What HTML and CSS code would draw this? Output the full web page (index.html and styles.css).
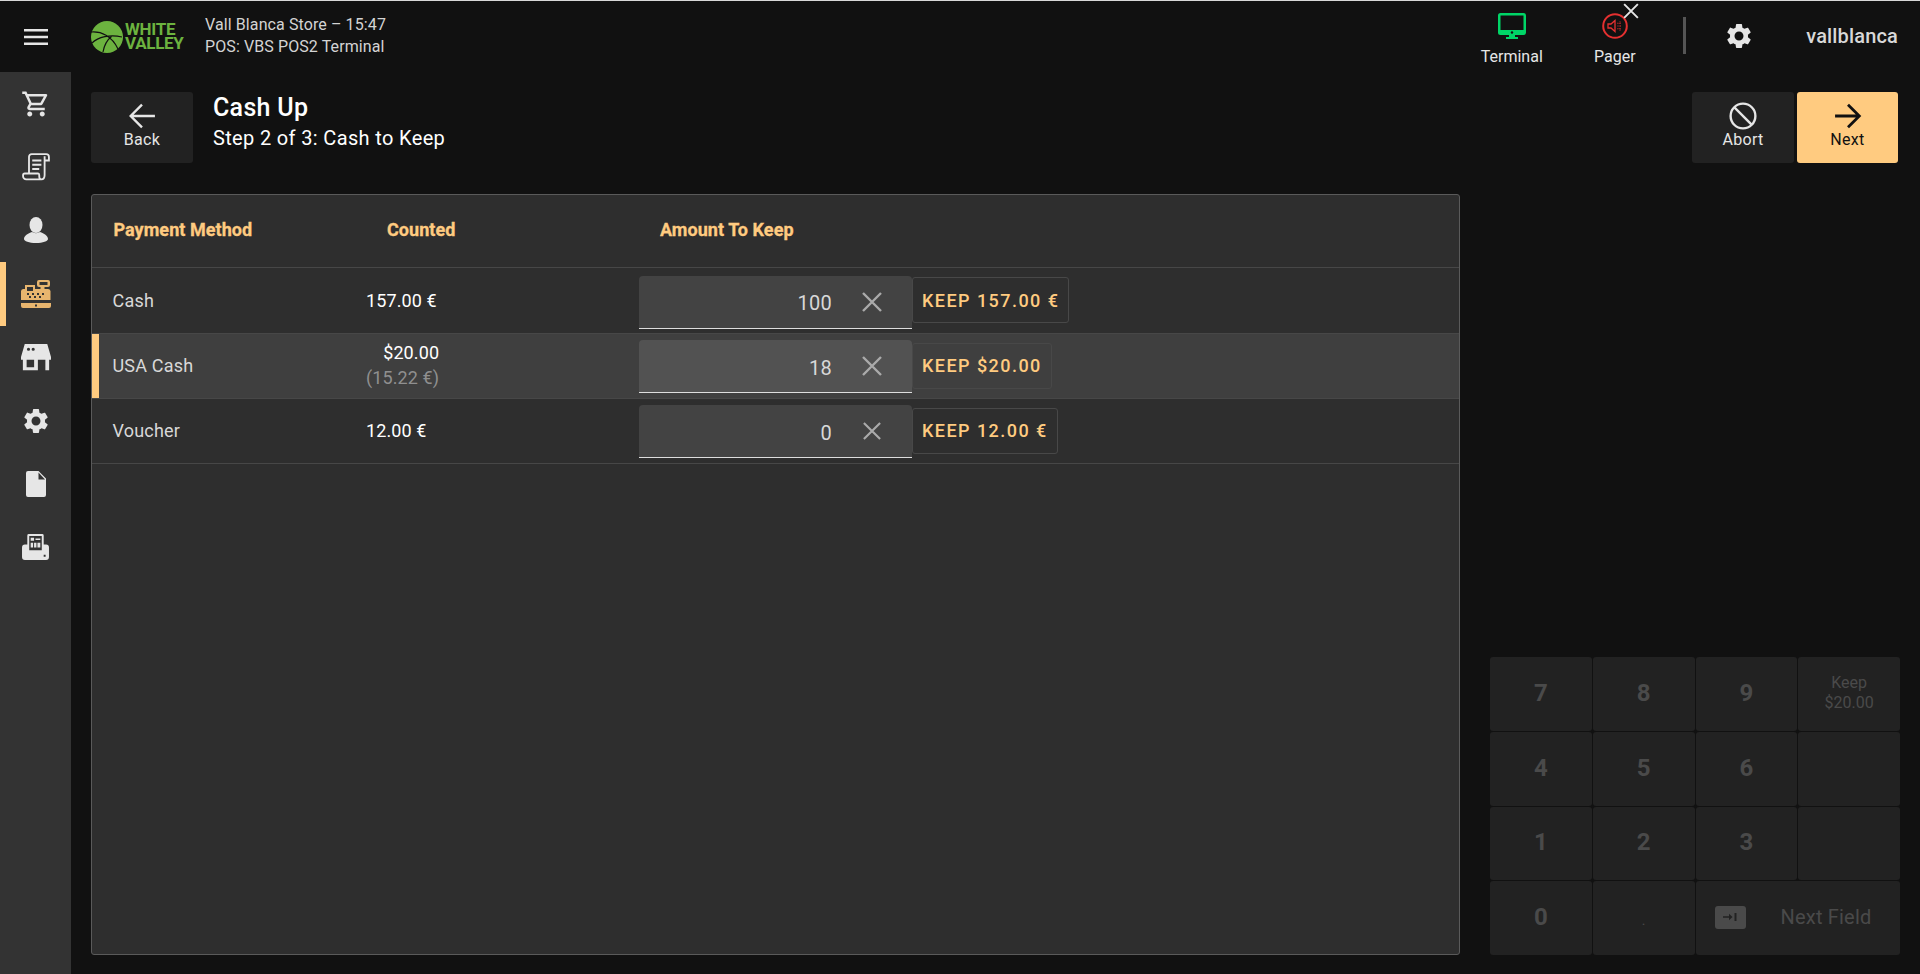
FILE: index.html
```html
<!DOCTYPE html>
<html lang="en">
<head>
<meta charset="utf-8">
<title>Cash Up</title>
<link rel="stylesheet" href="styles.css">
</head>
<body>
<div class="app">
  <header class="topbar">
    <button class="menu-btn" aria-label="Menu">
      <svg class="icon-menu" viewBox="0 0 24 16"><path d="M0 0h24v2.400H0zM0 6.800h24v2.400H0zM0 13.600h24V16H0z"/></svg>
    </button>
    <div class="logo">
      <svg class="logo-ball" viewBox="0 0 32 32"><circle cx="16" cy="16" r="16" fill="#6cb33f"/><path d="M0 11c10-1 21 4 27 17M1 22c6-6 18-9 30-6M12 31c1-6 4-12 9-16" fill="none" stroke="#111" stroke-width="1.200"/></svg>
      <div class="logo-text"><span>WHITE</span><span>VALLEY</span></div>
    </div>
    <div class="store-info">
      <div>Vall Blanca Store – 15:47</div>
      <div>POS: VBS POS2 Terminal</div>
    </div>
    <div class="topbar-right">
      <div class="status">
        <svg class="status-icon" viewBox="0 0 28 26"><path fill="#00d567" d="M2.500 0h23A2.500 2.500 0 0 1 28 2.500v17a2.500 2.500 0 0 1-2.500 2.500H17v2h3v2H8v-2h3v-2H2.500A2.500 2.500 0 0 1 0 19.500v-17A2.500 2.500 0 0 1 2.500 0zM2.500 2.500v14.500h23V2.500z"/><circle cx="14" cy="19.500" r="1.200" fill="#111"/></svg>
        <span>Terminal</span>
      </div>
      <div class="status pager">
        <svg class="status-icon" viewBox="0 0 26 26"><circle cx="13" cy="13" r="11.800" fill="none" stroke="#e53030" stroke-width="2"/><path fill="none" stroke="#e53030" stroke-width="1.300" d="M6 11h3l4-3.500v11L9 15H6z"/><path fill="none" stroke="#e53030" stroke-width="1.200" stroke-dasharray="1 1.500" d="M15.500 13h5M15.500 10.500l4-2.500M15.500 15.500l4 2.500M18 10v6"/></svg>
        <span>Pager</span>
        <svg class="pager-x" viewBox="0 0 14 14"><path d="M1 1l12 12M13 1L1 13" stroke="#e6e6e6" stroke-width="1.700" fill="none"/></svg>
      </div>
      <div class="divider"></div>
      <svg class="icon-gear top-gear" viewBox="0 0 24 24"><path d="M19.140 12.940c.04-.3.06-.61.06-.94 0-.32-.02-.64-.07-.94l2.030-1.580c.18-.14.23-.41.12-.61l-1.920-3.320c-.12-.22-.37-.29-.59-.22l-2.390.96c-.5-.38-1.030-.7-1.620-.94l-.36-2.540c-.04-.24-.24-.41-.48-.41h-3.840c-.24 0-.43.17-.47.41l-.36 2.540c-.59.24-1.130.57-1.620.94l-2.390-.96c-.22-.08-.47 0-.59.22L2.740 8.870c-.12.21-.08.47.12.61l2.030 1.580c-.05.3-.09.63-.09.94s.02.64.07.94l-2.030 1.580c-.18.14-.23.41-.12.61l1.920 3.320c.12.22.37.29.59.22l2.390-.96c.5.38 1.030.7 1.620.94l.36 2.540c.05.24.24.41.48.41h3.840c.24 0 .44-.17.47-.41l.36-2.540c.59-.24 1.130-.56 1.620-.94l2.390.96c.22.08.47 0 .59-.22l1.920-3.320c.12-.22.07-.47-.12-.61l-2.010-1.580zM12 15.600c-1.980 0-3.600-1.620-3.600-3.600s1.620-3.600 3.600-3.600 3.600 1.620 3.600 3.600-1.620 3.600-3.600 3.600z"/></svg>
      <div class="username">vallblanca</div>
    </div>
  </header>

  <div class="body">
    <nav class="sidebar">
      <div class="nav-item">
        <svg class="nav-icon" viewBox="0 0 24 24"><path d="M15.550 13c.75 0 1.410-.41 1.750-1.030l3.580-6.490c.37-.66-.11-1.480-.87-1.480H5.210l-.94-2H1v2h2l3.600 7.590-1.350 2.440C4.520 15.370 5.480 17 7 17h12v-2H7l1.100-2h7.450zM6.160 6h12.150l-2.760 5H8.530L6.160 6zM7 18c-1.100 0-1.990.9-1.990 2S5.900 22 7 22s2-.9 2-2-.9-2-2-2zm10 0c-1.100 0-1.990.9-1.990 2s.89 2 1.990 2 2-.9 2-2-.9-2-2-2z"/></svg>
      </div>
      <div class="nav-item">
        <svg class="nav-icon receipt" viewBox="0 0 26 26"><path fill="none" stroke="currentColor" stroke-width="1.700" d="M6.500 18V3.500C6.500 2 7.500 1 9 1h13.500c1.500 0 2.500 1 2.500 2.500V7h-4M21 3v17.500c0 2-1 4-3 4H4c-1.800 0-3-1.300-3-3v-1c0-1 .7-1.500 1.500-1.500H15c.8 0 1 .7 1 1.500v1c0 1.500.8 3 2 3"/><path d="M9.500 6h8.500v1.800H9.500zM9.500 10h8.500v1.800H9.500zM9.500 14h6.500v1.800H9.500z"/></svg>
      </div>
      <div class="nav-item">
        <svg class="nav-icon person" viewBox="0 0 24 27"><ellipse cx="12" cy="8" rx="6.500" ry="8"/><path d="M0 22c0-3.500 4-5.500 8-7 2.500 1.500 5.500 1.500 8 0 4 1.500 8 3.500 8 7 0 2-5 4-12 4S0 24 0 22z"/></svg>
      </div>
      <div class="nav-item active">
        <svg class="nav-icon till" viewBox="0 0 30 30"><path fill-rule="evenodd" d="M18 1h9a2 2 0 0 1 2 2v3a2 2 0 0 1-2 2h-3.500v2h3.500a2.500 2.500 0 0 1 2.500 2v9H0v-9a2.500 2.500 0 0 1 2.500-2H4V6h10v4h5.500V8H18a2 2 0 0 1-2-2V3a2 2 0 0 1 2-2zm.500 2v3h8V3zM6 8v4h6V8zM6 14v2h2v-2zm5 0v2h2v-2zm5 0v2h2v-2zm5 0v2h2v-2zm-13 3v2h2v-2zm5 0v2h2v-2zm5 0v2h2v-2z"/><path fill-rule="evenodd" d="M0 24h30v3a2 2 0 0 1-2 2H2a2 2 0 0 1-2-2zm14 1.500v2h2v-2z"/></svg>
      </div>
      <div class="nav-item">
        <svg class="nav-icon" viewBox="0 0 32 30"><path fill-rule="evenodd" d="M4 1h24l4 14v3h-2v11h-4V18H18v11H2V18H0v-3zM8 5a1.700 1.700 0 1 0 0 3.400A1.700 1.700 0 0 0 8 5zm5 0a1.700 1.700 0 1 0 0 3.400A1.700 1.700 0 0 0 13 5zM6 18v8h8v-8z"/></svg>
      </div>
      <div class="nav-item">
        <svg class="nav-icon icon-gear" viewBox="0 0 24 24"><path d="M19.140 12.940c.04-.3.06-.61.06-.94 0-.32-.02-.64-.07-.94l2.030-1.580c.18-.14.23-.41.12-.61l-1.920-3.320c-.12-.22-.37-.29-.59-.22l-2.390.96c-.5-.38-1.030-.7-1.620-.94l-.36-2.540c-.04-.24-.24-.41-.48-.41h-3.840c-.24 0-.43.17-.47.41l-.36 2.540c-.59.24-1.130.57-1.620.94l-2.390-.96c-.22-.08-.47 0-.59.22L2.740 8.870c-.12.21-.08.47.12.61l2.030 1.580c-.05.3-.09.63-.09.94s.02.64.07.94l-2.030 1.580c-.18.14-.23.41-.12.61l1.920 3.320c.12.22.37.29.59.22l2.390-.96c.5.38 1.030.7 1.620.94l.36 2.540c.05.24.24.41.48.41h3.840c.24 0 .44-.17.47-.41l.36-2.540c.59-.24 1.130-.56 1.620-.94l2.390.96c.22.08.47 0 .59-.22l1.920-3.320c.12-.22.07-.47-.12-.61l-2.010-1.580zM12 15.600c-1.980 0-3.600-1.620-3.600-3.600s1.620-3.600 3.600-3.600 3.600 1.620 3.600 3.600-1.620 3.600-3.600 3.600z"/></svg>
      </div>
      <div class="nav-item">
        <svg class="nav-icon file" viewBox="0 0 20 26"><path d="M2 0h10.500L20 7.500V24a2 2 0 0 1-2 2H2a2 2 0 0 1-2-2V2a2 2 0 0 1 2-2zm10.500 1.500V8.500H19z" fill-rule="evenodd"/></svg>
      </div>
      <div class="nav-item">
        <svg class="nav-icon printer" viewBox="0 0 28 27"><path fill-rule="evenodd" d="M7 0h14a1.500 1.500 0 0 1 1.500 1.500V11H25a3 3 0 0 1 3 3v10a3 3 0 0 1-3 3H3a3 3 0 0 1-3-3V14a3 3 0 0 1 3-3h2.500V1.500A1.500 1.500 0 0 1 7 0zm.500 2v15h13V2zM9 4h3.500v3H9zM14 4.800h5v1.500h-5zM9 9h2.500v5H9zM12.500 9H15v5h-2.500zM16 9h3v5h-3zM22.500 21.500v2h2v-2z"/></svg>
      </div>
    </nav>

    <main class="main">
      <div class="page-head">
        <button class="action">
          <svg class="action-icon" viewBox="0 0 26 26"><path d="M25 13H2M13 2.500L2.500 13 13 23.500" fill="none" stroke="currentColor" stroke-width="2.200"/></svg>
          <span>Back</span>
        </button>
        <div class="titles">
          <div class="title">Cash Up</div>
          <div class="subtitle">Step 2 of 3: Cash to Keep</div>
        </div>
        <div class="head-actions">
          <button class="action">
            <svg class="action-icon" viewBox="0 0 26 26"><circle cx="13" cy="13" r="11.500" fill="none" stroke="currentColor" stroke-width="2.200"/><path d="M5 5l16 16" stroke="currentColor" stroke-width="2.200"/></svg>
            <span>Abort</span>
          </button>
          <button class="action primary">
            <svg class="action-icon" viewBox="0 0 26 26"><path d="M1 13h23M13 2.500L23.500 13 13 23.500" fill="none" stroke="currentColor" stroke-width="2.600"/></svg>
            <span>Next</span>
          </button>
        </div>
      </div>

      <div class="content">
        <section class="panel">
          <div class="row head-row">
            <div class="cell th th-method">Payment Method</div>
            <div class="cell th th-counted">Counted</div>
            <div class="cell th th-amount">Amount To Keep</div>
          </div>
          <div class="row first-row">
            <div class="cell method">Cash</div>
            <div class="cell"><div class="counted"><span>157.00 €</span></div></div>
            <div class="input"><span class="value">100</span><svg class="clear" viewBox="0 0 20 20"><path d="M1 1l18 18M19 1L1 19"/></svg></div>
            <button class="keep">KEEP 157.00 €</button>
          </div>
          <div class="row selected raised">
            <div class="cell method">USA Cash</div>
            <div class="cell"><div class="counted"><span>$20.00</span><span class="sub">(15.22 €)</span></div></div>
            <div class="input"><span class="value">18</span><svg class="clear" viewBox="0 0 20 20"><path d="M1 1l18 18M19 1L1 19"/></svg></div>
            <button class="keep">KEEP $20.00</button>
          </div>
          <div class="row raised">
            <div class="cell method">Voucher</div>
            <div class="cell"><div class="counted"><span>12.00 €</span></div></div>
            <div class="input"><span class="value">0</span><svg class="clear small" viewBox="0 0 20 20"><path d="M1 1l18 18M19 1L1 19"/></svg></div>
            <button class="keep">KEEP 12.00 €</button>
          </div>
        </section>

        <aside class="pad">
          <div class="keypad">
            <div class="key">7</div>
            <div class="key">8</div>
            <div class="key">9</div>
            <div class="key small-key"><span>Keep</span><span>$20.00</span></div>
            <div class="key">4</div>
            <div class="key">5</div>
            <div class="key">6</div>
            <div class="key"></div>
            <div class="key">1</div>
            <div class="key">2</div>
            <div class="key">3</div>
            <div class="key"></div>
            <div class="key">0</div>
            <div class="key dot">.</div>
            <div class="key wide">
              <span class="tab-key"><svg viewBox="0 0 14 8"><path d="M0 3.300h6V.8L9.500 4 6 7.200V4.700H0zM11.500 0H13.500V8H11.500z"/></svg></span>
              <span class="next-field">Next Field</span>
            </div>
          </div>
        </aside>
      </div>
    </main>
  </div>
</div>
</body>
</html>
```

FILE: styles.css
```css
* { box-sizing: border-box; }
html, body { margin: 0; height: 100%; }
body {
  background: #111;
  color: #e6e6e6;
  font-family: Roboto, "Liberation Sans", sans-serif;
  overflow: hidden;
}
button { font-family: inherit; border: 0; padding: 0; cursor: pointer; }

.app { height: 100%; display: flex; flex-direction: column; border-top: 1px solid #d8d8d8; }

.topbar { height: 71px; flex: none; display: flex; align-items: center; }
.menu-btn {
  width: 72px; height: 71px; flex: none;
  display: flex; align-items: center; justify-content: center;
  background: none; color: #e6e6e6;
}
.icon-menu { width: 24px; height: 16px; fill: currentColor; }

.logo { margin-left: 19px; width: 114px; display: flex; align-items: center; gap: 2px; }
.logo-ball { width: 32px; height: 32px; flex: none; }
.logo-text {
  display: flex; flex-direction: column;
  font-size: 17px; line-height: 14px; font-weight: 700;
  color: #6cb33f; letter-spacing: -.3px; margin-top: -1px;
}

.store-info { font-size: 16px; line-height: 22px; color: #d4d4d4; font-weight: 400; letter-spacing: .1px; margin-top: -1px; }

.topbar-right { margin-left: auto; display: flex; align-items: center; padding-right: 22px; }
.status { width: 103px; display: flex; flex-direction: column; align-items: center; position: relative; margin-top: 6px; font-size: 16px; color: #e6e6e6; }
.status-icon { width: 28px; height: 26px; margin-bottom: 8px; }
.pager-x { position: absolute; top: -10px; left: 60px; width: 16px; height: 16px; }
.divider { width: 3px; height: 37px; background: #555; margin-left: 17px; margin-top: -2px; }
.icon-gear { fill: #e6e6e6; }
.top-gear { width: 30px; height: 30px; margin-left: 38px; margin-top: -1px; }
.username { margin-left: 52px; font-size: 20px; font-weight: 500; color: #d8d8d8; letter-spacing: .15px; margin-top: -2px; }

.body { flex: 1; min-height: 0; display: flex; }

.sidebar { width: 71px; flex: none; background: #333; display: flex; flex-direction: column; }
.nav-item {
  height: 63.400px; display: flex; align-items: center; justify-content: center;
  color: #e6e6e6; border-left: 6px solid transparent; padding-right: 6px;
}
.nav-item.active { border-left-color: #ffcb80; color: #e8b56e; }
.nav-icon { width: 30px; height: 30px; fill: currentColor; }
.nav-icon.receipt { width: 28px; height: 28px; }
.nav-icon.person { width: 24px; height: 27px; }
.nav-icon.file { width: 20px; height: 26px; }
.nav-icon.printer { width: 27px; height: 26px; }

.main { flex: 1; min-width: 0; display: flex; flex-direction: column; padding: 20px 22px 19px 20px; }

.page-head { display: flex; height: 71px; flex: none; }
.action {
  width: 102px; height: 71px; border-radius: 3px;
  background: #222; color: #e6e6e6;
  display: flex; flex-direction: column; align-items: center;
  font-size: 16px; letter-spacing: .3px; padding-top: 10px;
}
.action-icon { width: 28px; height: 28px; }
.action.primary { background: #ffcb80; color: #111; width: 101px; }
.titles { margin-left: 20px; color: #fff; }
.title { font-size: 25px; font-weight: 500; line-height: 32px; letter-spacing: .3px; }
.subtitle { font-size: 20px; line-height: 28px; letter-spacing: .35px; }
.head-actions { margin-left: auto; display: flex; gap: 3px; }

.content { flex: 1; min-height: 0; margin-top: 31px; display: flex; }

.panel { width: 1369px; flex: none; background: #2e2e2e; border: 1px solid #5a5a5a; border-radius: 3px; }
.row {
  display: grid; grid-template-columns: 274px 273px 273px auto; justify-content: start;
  align-items: center; height: 65px;
  border-bottom: 1px solid #474747;
}
.head-row { height: 73px; }
.first-row { height: 66px; }
.raised { padding-bottom: 2px; }
.row.selected { background: #3f3f3f; box-shadow: inset 7px 0 0 #ffcb80; }
.cell { font-size: 18px; }
.th { color: #ffcb80; font-weight: 700; -webkit-text-stroke: .3px #ffcb80; letter-spacing: .05px; white-space: nowrap; margin-top: -3px; }
.th-method { padding-left: 21.500px; }
.th-counted { padding-left: 21px; }
.th-amount { padding-left: 21px; }
.method { padding-left: 20.500px; color: #d8d8d8; letter-spacing: .2px; }
.counted { display: inline-flex; flex-direction: column; align-items: flex-end; color: #fff; line-height: 25px; letter-spacing: .1px; }
.counted .sub { color: #8f8f8f; }

.input {
  height: 53px; margin-top: 3px; background: #434343;
  border-bottom: 1px solid #ddd; border-radius: 4px 4px 0 0;
  display: flex; align-items: center; justify-content: flex-end;
  padding-right: 30px; font-size: 20px; color: #d8d8d8; letter-spacing: .3px;
}
.value { padding-top: 3px; }
.selected .input { background: #525252; }
.clear { width: 20px; height: 20px; margin-left: 30px; stroke: #aaa; stroke-width: 2.400; fill: none; flex: none; }
.clear.small { width: 18px; height: 18px; margin-left: 31px; margin-right: 1px; }

.keep {
  height: 46px; margin-top: 1px; padding: 0 9px; background: transparent;
  border: 1px solid #484848; border-radius: 3px; color: #ffcb80;
  font-size: 18px; font-weight: 500; letter-spacing: 1.450px; white-space: nowrap;
}
.first-row .keep { margin-top: -1px; }

.pad { flex: 1; display: flex; flex-direction: column; justify-content: flex-end; min-width: 0; }
.keypad {
  margin-left: 30px; width: 410px; height: 298px;
  display: grid; grid-template-columns: repeat(4, 1fr); grid-template-rows: repeat(4, 1fr); gap: 1px;
}
.key {
  background: #222; border-radius: 3px; color: #4a4a4a; padding-bottom: 2px;
  display: flex; align-items: center; justify-content: center;
  font-size: 24px; font-weight: 700;
}
.small-key { flex-direction: column; font-size: 16px; font-weight: 400; line-height: 20px; }
.dot { font-size: 14px; font-weight: 400; padding-bottom: 0; padding-top: 4px; }
.wide { grid-column: span 2; justify-content: flex-start; padding-left: 19px; font-size: 20px; font-weight: 400; letter-spacing: .2px; }
.tab-key { width: 31px; height: 23px; border-radius: 3px; background: #4a4a4a; display: flex; align-items: center; justify-content: center; }
.tab-key svg { width: 14px; height: 8px; fill: #222; }
.next-field { margin-left: 35px; }
```
